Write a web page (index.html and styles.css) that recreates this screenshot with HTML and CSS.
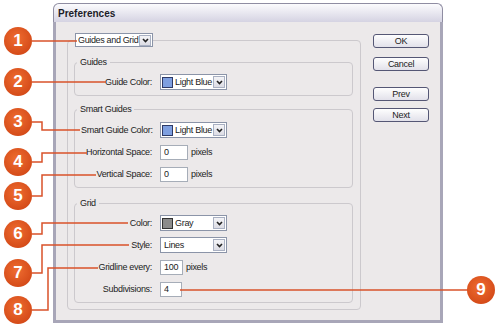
FILE: index.html
```html
<!DOCTYPE html>
<html lang="en">
<head>
  <meta charset="UTF-8">
  <title>Preferences</title>
  <link rel="stylesheet" href="styles.css">
</head>
<body>
  <div class="window">
    <div class="titlebar">Preferences</div>
    <div class="window-body">
      <fieldset class="panel">
        <legend class="panel-legend">
          <div class="select select-main">
            <span class="select-text">Guides and Grid</span>
            <span class="select-arrow"><svg width="7" height="5" viewBox="0 0 7 5"><path d="M1 1l2.5 2.5L6 1" fill="none" stroke="#222" stroke-width="1.6"/></svg></span>
          </div>
        </legend>

        <fieldset class="group">
          <legend>Guides</legend>
          <div class="row">
            <label>Guide Color:</label>
            <div class="select">
              <span class="swatch blue"></span>
              <span class="select-text">Light Blue</span>
              <span class="select-arrow"><svg width="7" height="5" viewBox="0 0 7 5"><path d="M1 1l2.5 2.5L6 1" fill="none" stroke="#222" stroke-width="1.6"/></svg></span>
            </div>
          </div>
        </fieldset>

        <fieldset class="group group-smart">
          <legend>Smart Guides</legend>
          <div class="row">
            <label>Smart Guide Color:</label>
            <div class="select">
              <span class="swatch blue"></span>
              <span class="select-text">Light Blue</span>
              <span class="select-arrow"><svg width="7" height="5" viewBox="0 0 7 5"><path d="M1 1l2.5 2.5L6 1" fill="none" stroke="#222" stroke-width="1.6"/></svg></span>
            </div>
          </div>
          <div class="row">
            <label>Horizontal Space:</label>
            <input type="text" class="field" value="0">
            <span class="unit">pixels</span>
          </div>
          <div class="row">
            <label>Vertical Space:</label>
            <input type="text" class="field" value="0">
            <span class="unit">pixels</span>
          </div>
        </fieldset>

        <fieldset class="group group-grid">
          <legend>Grid</legend>
          <div class="row">
            <label>Color:</label>
            <div class="select">
              <span class="swatch gray"></span>
              <span class="select-text">Gray</span>
              <span class="select-arrow"><svg width="7" height="5" viewBox="0 0 7 5"><path d="M1 1l2.5 2.5L6 1" fill="none" stroke="#222" stroke-width="1.6"/></svg></span>
            </div>
          </div>
          <div class="row">
            <label>Style:</label>
            <div class="select">
              <span class="select-text">Lines</span>
              <span class="select-arrow"><svg width="7" height="5" viewBox="0 0 7 5"><path d="M1 1l2.5 2.5L6 1" fill="none" stroke="#222" stroke-width="1.6"/></svg></span>
            </div>
          </div>
          <div class="row">
            <label>Gridline every:</label>
            <input type="text" class="field field-short" value="100">
            <span class="unit">pixels</span>
          </div>
          <div class="row">
            <label>Subdivisions:</label>
            <input type="text" class="field field-tiny" value="4">
          </div>
        </fieldset>
      </fieldset>

      <div class="buttons">
        <button class="btn btn-ok">OK</button>
        <button class="btn btn-cancel">Cancel</button>
        <button class="btn btn-prev">Prev</button>
        <button class="btn">Next</button>
      </div>
    </div>
  </div>

  <!-- callout leader lines -->
  <svg class="leaders" width="500" height="328" viewBox="0 0 500 328">
    <g fill="none" stroke="#d9522a" stroke-width="1.5">
      <path d="M32 41H77"/>
      <path d="M32 82H106"/>
      <path d="M32 122H42V130H80"/>
      <path d="M32 162H42V153H87"/>
      <path d="M32 196H42V175H96"/>
      <path d="M32 234H42V223H128"/>
      <path d="M32 273H42V245H129"/>
      <path d="M32 310H48V268H98"/>
      <path d="M180 290H468"/>
    </g>
  </svg>

  <div class="callout c1">1</div>
  <div class="callout c2">2</div>
  <div class="callout c3">3</div>
  <div class="callout c4">4</div>
  <div class="callout c5">5</div>
  <div class="callout c6">6</div>
  <div class="callout c7">7</div>
  <div class="callout c8">8</div>
  <div class="callout c9">9</div>
</body>
</html>
```

FILE: styles.css
```css
* {
  box-sizing: border-box;
}

body {
  margin: 0;
  width: 500px;
  height: 328px;
  position: relative;
  overflow: hidden;
  background-color: #fff;
  font-family: "Liberation Sans", Arial, sans-serif;
  font-size: 9px;
  letter-spacing: -0.3px;
  color: #222;
}

.window {
  margin: 3px 0 0 53px;
  width: 390px;
  height: 320px;
  display: flex;
  flex-direction: column;
}

.titlebar {
  height: 19px;
  border: 1px solid #8f8da2;
  border-bottom: none;
  border-radius: 6px 6px 0 0;
  background: linear-gradient(#fbfbfd, #d5d3e2);
  padding: 4px 0 0 4px;
  font-weight: bold;
  font-size: 10px;
  letter-spacing: 0;
  color: #1c1c28;
}

.window-body {
  flex: 1;
  display: flex;
  align-items: flex-start;
  background-color: #ece9ea;
  border: 3px solid #a8a6b8;
  border-top: none;
  padding: 11px 11px 0 11px;
}

/* group boxes */
.panel {
  margin: 0;
  width: 294px;
  min-width: 0;
  border: 1px solid #ccc9cd;
  border-radius: 4px;
  padding: 9px 7px 6px 6px;
}

.panel-legend {
  padding: 0;
  margin-left: 1px;
}

.group {
  margin: 0;
  width: 279px;
  min-width: 0;
  border: 1px solid #ccc9cd;
  border-radius: 4px;
  padding: 6px 6px 5px 6px;
}

.group legend {
  padding: 0 3px;
  margin-left: -4px;
  line-height: 12px;
}

.group-smart {
  margin-top: 7px;
  padding-top: 7px;
}

.group-grid {
  margin-top: 9px;
}

.row {
  display: flex;
  align-items: center;
  height: 16px;
  margin-bottom: 6px;
}

.row:last-child {
  margin-bottom: 0;
}

.row label {
  width: 71px;
  margin-right: 8px;
  text-align: right;
  white-space: nowrap;
}

/* fake dropdowns */
.select {
  display: flex;
  align-items: center;
  width: 67px;
  height: 16px;
  background-color: #fff;
  border: 1px solid #8b94a8;
  padding: 0 1px;
}

.select-main {
  width: 78px;
  height: 14px;
  letter-spacing: -0.35px;
}

.select-text {
  flex: 1;
  padding-left: 2px;
  white-space: nowrap;
  overflow: hidden;
}

.select-main .select-text {
  padding-left: 1px;
}

.select-arrow {
  flex: none;
  width: 12px;
  height: 12px;
  display: flex;
  align-items: center;
  justify-content: center;
  background: linear-gradient(#f4f4f7, #dcdce4);
  border: 1px solid #a9b0c2;
}

.select-main .select-arrow {
  height: 11px;
}

.swatch {
  flex: none;
  width: 11px;
  height: 11px;
  border: 1px solid #2e3a66;
}

.swatch.blue {
  background-color: #7e9fe0;
}

.swatch.gray {
  background-color: #8b8b8b;
  border-color: #333;
}

/* text inputs */
.field {
  width: 28px;
  height: 15px;
  padding: 0 0 0 3px;
  border: 1px solid #a6adb8;
  background-color: #fff;
  font: inherit;
  letter-spacing: inherit;
  color: #222;
}

.field-short {
  width: 23px;
}

.field-tiny {
  width: 22px;
}

.unit {
  margin-left: 3px;
}

/* buttons */
.buttons {
  display: flex;
  flex-direction: column;
  width: 56px;
  margin: 1px 0 0 12px;
}

.btn {
  height: 14px;
  padding: 0;
  margin-bottom: 7px;
  border: 1px solid #555775;
  border-radius: 3px;
  background: linear-gradient(#fefefe, #e2e1ea);
  font: inherit;
  letter-spacing: inherit;
  line-height: 12px;
  color: #222;
}

.btn-ok {
  margin-bottom: 9px;
}

.btn-cancel {
  margin-bottom: 16px;
}

/* annotation overlay */
.leaders {
  position: absolute;
  left: 0;
  top: 0;
}

.callout {
  position: absolute;
  left: 4px;
  width: 28px;
  height: 28px;
  border-radius: 50%;
  background: radial-gradient(circle at 45% 40%, #ef6d31, #d44a18 75%, #b93c12);
  color: #fff;
  font-weight: bold;
  font-size: 17px;
  letter-spacing: 0;
  line-height: 28px;
  text-align: center;
}

.c1 { top: 27px; }
.c2 { top: 68px; }
.c3 { top: 108px; }
.c4 { top: 148px; }
.c5 { top: 182px; }
.c6 { top: 220px; }
.c7 { top: 259px; }
.c8 { top: 296px; }
.c9 { top: 276px; left: 467px; }
```
